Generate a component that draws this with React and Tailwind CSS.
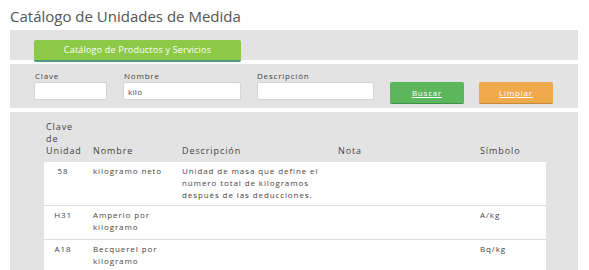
import React from 'react'

const rows = [
  { clave: '58', nombre: 'kilogramo neto', desc: 'Unidad de masa que define el número total de kilogramos después de las deducciones.', nota: '', simbolo: '', h: 'h-[44px]' },
  { clave: 'H31', nombre: 'Amperio por kilogramo', desc: '', nota: '', simbolo: 'A/kg', h: 'h-[34px]' },
  { clave: 'A18', nombre: 'Becquerel por kilogramo', desc: '', nota: '', simbolo: 'Bq/kg', h: 'h-[34px]' },
]

const App = () => {
  return (
    <div className="w-[589px] h-[270px] overflow-hidden bg-white font-['Open_Sans',sans-serif] text-[#444]">
      <h1 className="pl-[10px] pt-[6px] h-[30px] text-[15px] leading-[20px] text-[#555]">Catálogo de Unidades de Medida</h1>

      <div className="ml-[10px] w-[568px] h-[30px] bg-[#e3e3e3] pl-[24px] pt-[5px]">
        <button className="w-[207px] h-[22px] bg-[#8cc947] border-b-2 border-[#4e9c7c] rounded-[2px] text-white text-[9px] tracking-[0.2px]">
          Catálogo de Productos y Servicios
        </button>
      </div>

      <div className="ml-[10px] mt-[4px] w-[568px] h-[44px] bg-[#e3e3e3] pl-[24px] pt-[5px] flex items-start text-[8px] tracking-[0.8px]">
        <div className="w-[89px]">
          <div className="h-[13px] leading-[13px] pl-[1px]">Clave</div>
          <input className="w-[73px] h-[18px] bg-white border border-[#d4d4d4] rounded-[2px] outline-none" />
        </div>
        <div className="w-[134px]">
          <div className="h-[13px] leading-[13px] pl-[1px]">Nombre</div>
          <input defaultValue="kilo" className="w-[118px] h-[18px] bg-white border border-[#d4d4d4] rounded-[2px] outline-none px-[4px] text-[8px] tracking-[0.3px]" />
        </div>
        <div className="w-[133px]">
          <div className="h-[13px] leading-[13px]">Descripción</div>
          <input className="w-[117px] h-[18px] bg-white border border-[#d4d4d4] rounded-[2px] outline-none" />
        </div>
        <div className="pt-[13px] flex gap-[15px]">
          <button className="w-[74px] h-[22px] bg-[#5cb65c] border-b border-[#3f8f48] rounded-[2px] text-white underline text-[8px]">Buscar</button>
          <button className="w-[74px] h-[22px] bg-[#f0aa4b] border-b border-[#c7883a] rounded-[2px] text-white underline text-[8px]">Limpiar</button>
        </div>
      </div>

      <div className="ml-[10px] mt-[4px] w-[568px] h-[160px] bg-[#e3e3e3] pl-[34px] pt-[6px] text-[8px] tracking-[0.9px]">
        <div className="w-[502px]">
          <div className="grid grid-cols-[46px_90px_152px_140px_74px] h-[44px] items-end pb-[5px] leading-[12px] text-[9px]">
            <div className="pl-[2px]">Clave<br />de<br />Unidad</div>
            <div className="pl-[3px]">Nombre</div>
            <div className="pl-[2px]">Descripción</div>
            <div className="pl-[6px]">Nota</div>
            <div className="pl-[8px]">Símbolo</div>
          </div>
          {rows.map((r) => (
            <div key={r.clave} className={`grid grid-cols-[46px_90px_152px_140px_74px] ${r.h} bg-white border-b border-[#dcdcdc] pt-[3px] leading-[12px]`}>
              <div className="text-center pr-[8px]">{r.clave}</div>
              <div className="pl-[3px] pr-[10px]">{r.nombre}</div>
              <div className="pl-[2px] pr-[4px]">{r.desc}</div>
              <div>{r.nota}</div>
              <div className="pl-[8px]">{r.simbolo}</div>
            </div>
          ))}
        </div>
      </div>
    </div>
  )
}

export default App
